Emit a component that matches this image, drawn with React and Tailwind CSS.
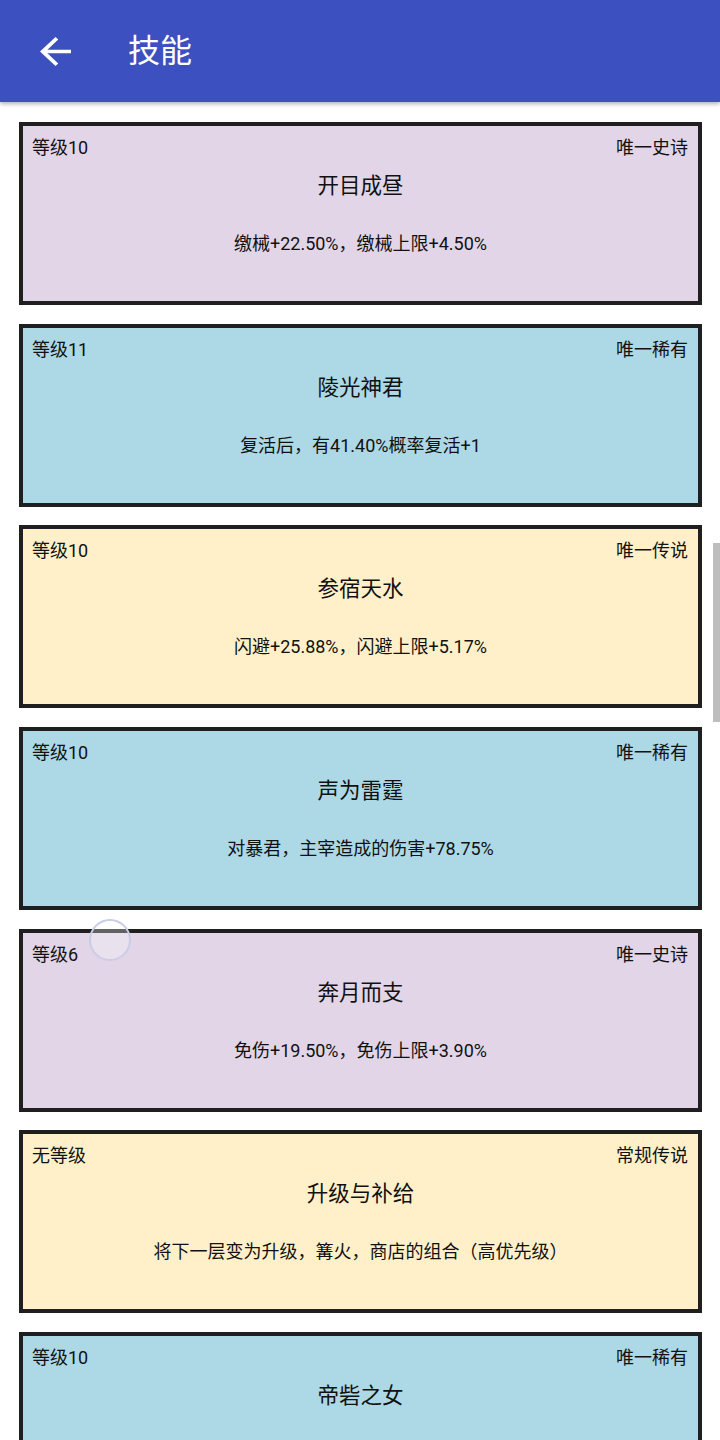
import React from 'react';

const skills = [
  { level: '等级10', tag: '唯一史诗', name: '开目成昼', desc: '缴械+22.50%，缴械上限+4.50%', tone: 'epic' },
  { level: '等级11', tag: '唯一稀有', name: '陵光神君', desc: '复活后，有41.40%概率复活+1', tone: 'rare' },
  { level: '等级10', tag: '唯一传说', name: '参宿天水', desc: '闪避+25.88%，闪避上限+5.17%', tone: 'legend' },
  { level: '等级10', tag: '唯一稀有', name: '声为雷霆', desc: '对暴君，主宰造成的伤害+78.75%', tone: 'rare' },
  { level: '等级6', tag: '唯一史诗', name: '奔月而支', desc: '免伤+19.50%，免伤上限+3.90%', tone: 'epic' },
  { level: '无等级', tag: '常规传说', name: '升级与补给', desc: '将下一层变为升级，篝火，商店的组合（高优先级）', tone: 'legend' },
  { level: '等级10', tag: '唯一稀有', name: '帝砦之女', desc: '', tone: 'rare' },
];

const toneBg = {
  epic: 'bg-[#e1d5e7]',
  rare: 'bg-[#add8e6]',
  legend: 'bg-[#fff0c9]',
};

const SkillCard = ({ skill }) => (
  <div className={`h-[183px] shrink-0 border-4 border-[#1f1f1f] ${toneBg[skill.tone]} pt-[12px] px-[9px] flex flex-col text-[#111]`}>
    <div className="flex justify-between text-[18px] leading-[20px]">
      <span>{skill.level}</span>
      <span className="mr-[1px]">{skill.tag}</span>
    </div>
    <div className="mt-[14px] text-center text-[21.5px] leading-[28px]">{skill.name}</div>
    <div className="mt-[33px] text-center text-[18px] leading-[22px]">{skill.desc}</div>
  </div>
);

export default function App() {
  return (
    <div
      className="relative h-[1440px] w-[720px] overflow-hidden bg-white"
      style={{ fontFamily: 'Roboto, "Noto Sans CJK SC", sans-serif' }}
    >
      <header className="relative z-10 flex h-[102px] items-center bg-[#3c50bf] shadow-[0_2px_4px_rgba(0,0,0,0.3)]">
        <svg className="ml-[40px]" width="31" height="29" viewBox="4 4 16 16" preserveAspectRatio="none" fill="white">
          <path d="M20 11H7.83l5.59-5.59L12 4l-8 8 8 8 1.41-1.41L7.83 13H20v-2z" />
        </svg>
        <h1 className="ml-[57px] text-[32px] leading-none text-white">技能</h1>
      </header>

      <main className="flex flex-col gap-[18.7px] pt-[20px] pl-[19px] pr-[18px]">
        {skills.map((s, i) => (
          <SkillCard key={i} skill={s} />
        ))}
      </main>

      {/* scroll indicator */}
      <div className="absolute right-0 top-[543px] h-[179px] w-[7px] bg-[#bdbdbd]" />

      {/* touch feedback */}
      <div className="absolute left-[89px] top-[919px] h-[42px] w-[42px] rounded-full border-2 border-[#c9cde6] bg-white/30" />
    </div>
  );
}
